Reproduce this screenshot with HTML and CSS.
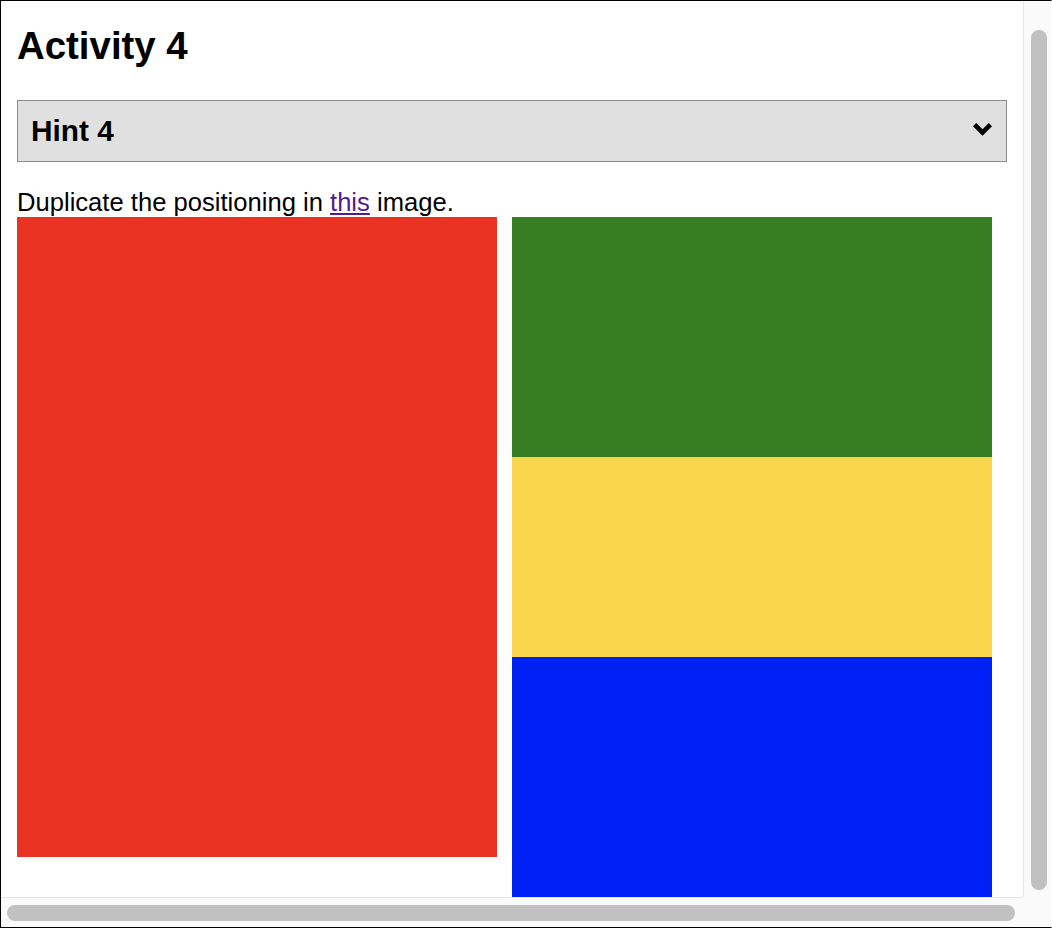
FILE: index.html
```html
<!DOCTYPE html>
<html lang="en">
<head>
<meta charset="utf-8">
<title>Activity 4</title>
<link rel="stylesheet" href="styles.css">
</head>
<body>
<div class="frame">
  <div class="viewport">
    <h1 class="title">Activity 4</h1>
    <div class="hint">
      <span class="hint-label">Hint 4</span>
      <svg class="chevron" width="19" height="13" viewBox="0 0 19 13" aria-hidden="true">
        <polygon points="0,3.2 3.2,0 9.5,6.3 15.8,0 19,3.2 9.5,12.7" fill="#000"/>
      </svg>
    </div>
    <p class="instructions">Duplicate the positioning in <a class="link" href="#">this</a> image.</p>
    <div class="boxes">
      <div class="box box-red"></div>
      <div class="stack">
        <div class="box box-green"></div>
        <div class="box box-yellow"></div>
        <div class="box box-blue"></div>
      </div>
    </div>
  </div>
  <div class="vbar"><div class="vthumb"></div></div>
  <div class="hbar"><div class="hthumb"></div></div>
  <div class="corner"></div>
</div>
</body>
</html>
```

FILE: styles.css
```css
html, body {
  margin: 0;
  padding: 0;
  background: #fff;
}

.frame {
  width: 1052px;
  height: 928px;
  box-sizing: border-box;
  border-top: 1px solid #000;
  border-left: 1px solid #000;
  border-bottom: 1px solid #000;
  border-right: 1px solid #fff;
  display: grid;
  grid-template-columns: 1022px 28px;
  grid-template-rows: 896px 30px;
  grid-template-areas:
    "view vbar"
    "hbar corner";
  font-family: "Liberation Sans", Arial, sans-serif;
  color: #000;
}

.viewport {
  grid-area: view;
  overflow: hidden;
  padding: 0 16px;
}

.title {
  margin: 23px 0 0;
  font-size: 38.4px;
  line-height: 44px;
  font-weight: bold;
}

.hint {
  margin-top: 32px;
  height: 60px;
  border: 1px solid #8c8c8c;
  background: #e0e0e0;
  display: flex;
  align-items: center;
  justify-content: space-between;
  padding: 0 14px 0 13px;
}

.hint-label {
  font-size: 29.8px;
  line-height: 60px;
  font-weight: bold;
}

.chevron {
  display: block;
  margin-bottom: 4px;
}

.instructions {
  margin: 26px 0 0;
  font-size: 25.6px;
  line-height: 29px;
}

.link {
  color: #551a8b;
}

.boxes {
  display: flex;
  gap: 15px;
  align-items: flex-start;
}

.stack {
  display: flex;
  flex-direction: column;
}

.box {
  width: 480px;
}

.box-red {
  height: 640px;
  background: #ea3323;
}

.box-green {
  height: 240px;
  background: #377e22;
}

.box-yellow {
  height: 200px;
  background: #f9d64b;
}

.box-blue {
  height: 240px;
  background: #0021f5;
}

.vbar {
  grid-area: vbar;
  background: #fafafa;
  border-left: 1px solid #e8e8e8;
  padding: 29px 4px 7px 7px;
  box-sizing: border-box;
}

.vthumb {
  width: 16px;
  height: 100%;
  border-radius: 8px;
  background: #c1c1c1;
}

.hbar {
  grid-area: hbar;
  background: #fafafa;
  border-top: 1px solid #e8e8e8;
  padding: 7px 8px 6px 6px;
  box-sizing: border-box;
}

.hthumb {
  height: 16px;
  width: 100%;
  border-radius: 8px;
  background: #c1c1c1;
}

.corner {
  grid-area: corner;
  background: #fafafa;
}
```
